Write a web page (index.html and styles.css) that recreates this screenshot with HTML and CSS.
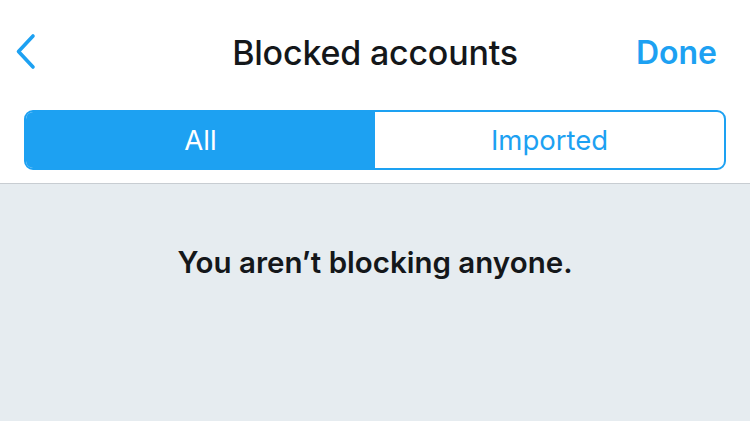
FILE: index.html
```html
<!DOCTYPE html>
<html>
<head>
<meta charset="utf-8">
<link rel="stylesheet" href="styles.css">
</head>
<body>
<div class="top">
  <div class="nav">
    <div class="back">
      <svg width="24" height="40" viewBox="0 0 24 40"><path d="M20 4 L5.5 19.5 L20 35" fill="none" stroke="#1DA1F2" stroke-width="3.6" stroke-linecap="round" stroke-linejoin="round"/></svg>
    </div>
    <div class="title">Blocked accounts</div>
    <div class="done">Done</div>
  </div>
  <div class="segwrap">
    <div class="seg">
      <div class="opt active">All</div>
      <div class="opt">Imported</div>
    </div>
  </div>
</div>
<div class="empty">You aren’t blocking anyone.</div>
</body>
</html>
```
FILE: styles.css
```css
html, body { margin: 0; padding: 0; }
body {
  width: 750px;
  height: 421px;
  background: #E6ECF0;
  font-family: Inter, "Noto Sans", sans-serif;
  color: #14171A;
  overflow: hidden;
}
.top {
  background: #fff;
  border-bottom: 1px solid #C8CDD2;
}
.nav {
  height: 104px;
  display: grid;
  grid-template-columns: 1fr auto 1fr;
  align-items: center;
  padding: 0 33px 0 33px;
}
.back { display: flex; width: 24px; height: 40px; justify-self: start; margin-left: -20px; }
.title {
  font-size: 34px;
  font-weight: 500;
  letter-spacing: -0.2px;
  color: #14171A;
}
.done {
  justify-self: end;
  font-size: 32px;
  font-weight: 600;
  color: #1DA1F2;
}
.segwrap {
  padding: 6px 24px 13px 24px;
}
.seg {
  display: flex;
  height: 56px;
  border: 2px solid #1DA1F2;
  border-radius: 9px;
  overflow: hidden;
}
.opt {
  flex: 1;
  display: flex;
  align-items: center;
  justify-content: center;
  font-size: 27.5px;
  color: #1DA1F2;
  font-weight: 400;
}
.opt.active {
  background: #1DA1F2;
  color: #fff;
}
.empty {
  text-align: center;
  padding-top: 60px;
  font-size: 29.5px;
  font-weight: 600;
  color: #14171A;
}
```
